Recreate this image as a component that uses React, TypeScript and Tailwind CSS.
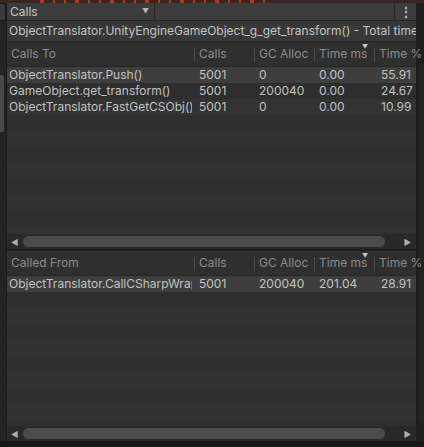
import React from "react";

type Row = { name: string; calls: string; gc: string; ms: string; pct: string };

const callsTo: Row[] = [
  { name: "ObjectTranslator.Push()", calls: "5001", gc: "0", ms: "0.00", pct: "55.91" },
  { name: "GameObject.get_transform()", calls: "5001", gc: "200040", ms: "0.00", pct: "24.67" },
  { name: "ObjectTranslator.FastGetCSObj()", calls: "5001", gc: "0", ms: "0.00", pct: "10.99" },
];

const calledFrom: Row[] = [
  { name: "ObjectTranslator.CallCSharpWrapper()", calls: "5001", gc: "200040", ms: "201.04", pct: "28.91" },
];

const HeaderCell: React.FC<{ label: string; w: string; sorted?: boolean; first?: boolean }> = ({
  label,
  w,
  sorted,
  first,
}) => (
  <div className={`relative flex h-full shrink-0 items-center ${w}`}>
    {!first && <span className="absolute left-0 top-[6px] h-[14px] w-px bg-[#4a4a4a]" />}
    <span className={`${first ? "pl-[4px]" : "pl-[5px]"} whitespace-nowrap`}>{label}</span>
    {sorted && (
      <span className="absolute left-[48px] top-[2px] text-[6px] leading-none text-[#c8c8c8]">▼</span>
    )}
  </div>
);

const Table: React.FC<{ title: string; rows: Row[]; bodyRows: number; h: string }> = ({
  title,
  rows,
  bodyRows,
  h,
}) => {
  const filler = Array.from({ length: bodyRows - rows.length });
  return (
    <div className={`flex min-h-0 shrink-0 flex-col bg-[#2e2e2e] ${h}`}>
      {/* header */}
      <div className="flex h-[25px] shrink-0 items-center border-b border-[#252525] bg-[#2f2f2f] text-[#8c8c8c]">
        <HeaderCell label={title} w="w-[187px]" first />
        <HeaderCell label="Calls" w="w-[60px]" />
        <HeaderCell label="GC Alloc" w="w-[60px]" />
        <HeaderCell label="Time ms" w="w-[60px]" sorted />
        <HeaderCell label="Time %" w="w-[43px]" />
      </div>
      {/* body */}
      <div className="flex min-h-0 flex-1 flex-col overflow-hidden">
        {rows.map((r, i) => (
          <div
            key={r.name}
            className={`flex h-[16px] shrink-0 items-center text-[#c2c2c2] ${
              i === 0 ? "bg-[#3e3e3e]" : i % 2 === 1 ? "bg-[#2e2e2e]" : "bg-[#333333]"
            }`}
          >
            <div className="w-[187px] shrink-0 pl-[2px] pr-[2px]">
              <div className="overflow-hidden whitespace-nowrap">{r.name}</div>
            </div>
            <div className="w-[60px] shrink-0 pl-[5px]">{r.calls}</div>
            <div className="w-[60px] shrink-0 pl-[5px]">{r.gc}</div>
            <div className="w-[60px] shrink-0 pl-[5px]">{r.ms}</div>
            <div className="w-[43px] shrink-0 pl-[7px]">{r.pct}</div>
          </div>
        ))}
        {filler.map((_, i) => (
          <div
            key={i}
            className={`h-[16px] shrink-0 ${(i + rows.length) % 2 === 1 ? "bg-[#2e2e2e]" : "bg-[#323232]"}`}
          />
        ))}
      </div>
      {/* horizontal scrollbar */}
      <div className="flex h-[15px] shrink-0 items-center bg-[#292929]">
        <span className="w-[16px] pl-[4px] text-[8px] leading-none text-[#b0b0b0]">◀</span>
        <div className="h-[11px] w-[362px] rounded-full bg-[#4b4b4b]" />
        <div className="flex-1" />
        <span className="pr-[5px] text-[8px] leading-none text-[#b0b0b0]">▶</span>
      </div>
    </div>
  );
};

export default function App() {
  return (
    <div
      className="flex h-[447px] w-[424px] flex-col overflow-hidden bg-[#1c1c1c] text-[12px] leading-none"
      style={{ fontFamily: "Inter, 'Noto Sans', sans-serif" }}
    >
      {/* graph remnant strip */}
      <div className="flex h-[3px] shrink-0 gap-[9px] overflow-hidden bg-[#3a2620] px-[40px]">
        {Array.from({ length: 20 }).map((_, i) => (
          <span key={i} className={`h-full ${i % 3 === 0 ? "w-[4px]" : "w-[2px]"} bg-[#b33a1a]`} />
        ))}
      </div>

      <div className="flex min-h-0 flex-1">
        {/* left gutter */}
        <div className="flex w-[6px] shrink-0 flex-col bg-[#232323]">
          <div className="h-[18px] rounded-r-[3px] border border-l-0 border-[#1a1a1a] bg-[#3a3a3a]" />
          <div className="mt-[54px] h-[57px] w-[4px] rounded-r-[2px] bg-[#4a4a4a]" />
        </div>

        {/* main panel */}
        <div className="flex w-[410px] shrink-0 flex-col border-l border-[#1a1a1a]">
          {/* toolbar */}
          <div className="flex h-[18px] shrink-0 items-center border-b border-[#242424] bg-[#3c3c3c]">
            <div className="flex h-full w-[148px] items-center justify-between border-r border-[#2a2a2a] pl-[3px] pr-[5px] text-[#c4c4c4]">
              <span>Calls</span>
              <span className="text-[7px] text-[#b8b8b8]">▼</span>
            </div>
            <div className="flex-1" />
            <div className="flex h-full w-[22px] items-center justify-center border-l border-[#2a2a2a] text-[#c4c4c4]">
              <span className="font-bold">⋮</span>
            </div>
          </div>

          {/* title */}
          <div className="flex h-[21px] shrink-0 items-center overflow-hidden whitespace-nowrap border-b border-[#242424] bg-[#383838] pl-[2px] text-[#c4c4c4]">
            ObjectTranslator.UnityEngineGameObject_g_get_transform() - Total time
          </div>

          <Table title="Calls To" rows={callsTo} bodyRows={12} h="h-[207px]" />
          <div className="h-[2px] shrink-0 bg-[#1e1e1e]" />
          <Table title="Called From" rows={calledFrom} bodyRows={11} h="h-[190px]" />
        </div>

        {/* right gutter */}
        <div className="flex w-[8px] shrink-0 bg-[#1e1e1e]">
          <div className="ml-[3px] mt-[60px] h-[360px] w-[5px] bg-[#242424]" />
        </div>
      </div>

      <div className="h-[6px] shrink-0 bg-[#191919]" />
    </div>
  );
}
